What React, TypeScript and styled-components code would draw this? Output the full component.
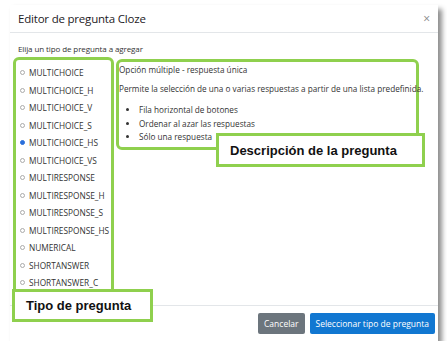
import styled, { createGlobalStyle } from "styled-components";

const GlobalStyle = createGlobalStyle`
    body {
        margin: 0;
        background: #ffffff;
        font-family: "Open Sans", sans-serif;
    }
`

const options = [
    "MULTICHOICE",
    "MULTICHOICE_H",
    "MULTICHOICE_V",
    "MULTICHOICE_S",
    "MULTICHOICE_HS",
    "MULTICHOICE_VS",
    "MULTIRESPONSE",
    "MULTIRESPONSE_H",
    "MULTIRESPONSE_S",
    "MULTIRESPONSE_HS",
    "NUMERICAL",
    "SHORTANSWER",
    "SHORTANSWER_C",
]

const bullets = [
    "Fila horizontal de botones",
    "Ordenar al azar las respuestas",
    "Sólo una respuesta",
]

export default function App() {
    return (
        <>
            <GlobalStyle />
            <Dialog>
                <Header>
                    <Title>Editor de pregunta Cloze</Title>
                    <Close>×</Close>
                </Header>
                <Body>
                    <Prompt>Elija un tipo de pregunta a agregar</Prompt>
                    <Columns>
                        <TypeList>
                            {options.map((o) => (
                                <Option key={o}>
                                    <Radio $checked={o === "MULTICHOICE_HS"} />
                                    {o}
                                </Option>
                            ))}
                        </TypeList>
                        <Description>
                            <DescTitle>Opción múltiple - respuesta única</DescTitle>
                            <DescText>
                                Permite la selección de una o varias respuestas a partir de una lista predefinida.
                            </DescText>
                            <Bullets>
                                {bullets.map((b) => (
                                    <li key={b}>{b}</li>
                                ))}
                            </Bullets>
                        </Description>
                    </Columns>
                </Body>
                <Footer>
                    <Button $variant="secondary">Cancelar</Button>
                    <Button $variant="primary">Seleccionar tipo de pregunta</Button>
                </Footer>
                {/* etiquetas de la captura anotada */}
                <DescCallout>Descripción de la pregunta</DescCallout>
                <TypeCallout>Tipo de pregunta</TypeCallout>
            </Dialog>
        </>
    );
}

const green = "#8fd04e"

const Dialog = styled.div`
    position: relative;
    margin: 5px 0 0 10px;
    width: 428px;
    height: 336px;
    background: #ffffff;
    box-shadow: 4px 4px 5px rgba(0, 0, 0, 0.45);
    display: flex;
    flex-direction: column;
`

const Header = styled.div`
    height: 27px;
    border-bottom: 1px solid #e3e6e9;
    display: flex;
    align-items: center;
    justify-content: space-between;
    padding: 0 8px;
`

const Title = styled.div`
    font-size: 11.5px;
    letter-spacing: -0.2px;
    color: #1d2125;
`

const Close = styled.div`
    font-size: 12px;
    color: #888;
`

const Body = styled.div`
    flex: 1;
    padding: 10px 0 0 3px;
    overflow: hidden;
`

const Prompt = styled.div`
    font-size: 8px;
    letter-spacing: -0.1px;
    color: #333;
    margin: 0 0 3px 5px;
`

const Columns = styled.div`
    display: flex;
    align-items: flex-start;
    gap: 2px;
`

const TypeList = styled.div`
    width: 95px;
    height: 232px;
    border: 3px solid ${green};
    border-radius: 6px;
    padding-top: 4px;
    display: flex;
    flex-direction: column;
`

const Option = styled.div`
    height: 17.5px;
    display: flex;
    align-items: center;
    gap: 4px;
    padding-left: 4px;
    font-size: 8.3px;
    color: #333;
    white-space: nowrap;
`

const Radio = styled.span<{ $checked: boolean }>`
    width: 5px;
    height: 5px;
    border-radius: 50%;
    box-sizing: border-box;
    border: 1px solid ${(p) => (p.$checked ? "#2a6fdb" : "#aaa")};
    background: ${(p) => (p.$checked ? "#2a6fdb" : "#fff")};
`

const Description = styled.div`
    width: 297px;
    height: 83px;
    margin-top: 2px;
    border: 3px solid ${green};
    border-radius: 6px;
    padding: 2px 0 0 0;
    font-size: 8.2px;
    color: #333;
`

const DescTitle = styled.div`
    margin-bottom: 8px;
`

const DescText = styled.div`
    white-space: nowrap;
`

const Bullets = styled.ul`
    margin: 9px 0 0;
    padding-left: 20px;
    line-height: 13.5px;
`

const Footer = styled.div`
    height: 35px;
    border-top: 1px solid #e3e6e9;
    display: flex;
    align-items: center;
    justify-content: flex-end;
    gap: 5px;
    padding: 0 3px 0 0;
`

const Button = styled.div<{ $variant: "primary" | "secondary" }>`
    height: 21px;
    padding: 0 6px;
    display: flex;
    align-items: center;
    border-radius: 2px;
    font-size: 8.5px;
    color: #fff;
    background: ${(p) => (p.$variant === "primary" ? "#1177d1" : "#6c757d")};
`

const Callout = styled.div`
    position: absolute;
    box-sizing: border-box;
    background: #fff;
    border: 3px solid ${green};
    display: flex;
    align-items: center;
    padding-left: 11px;
    font-family: "Liberation Sans", Arial, sans-serif;
    font-weight: 700;
    font-size: 13px;
    color: #111;
`

const DescCallout = styled(Callout)`
    left: 206px;
    top: 128px;
    width: 209px;
    height: 34px;
`

const TypeCallout = styled(Callout)`
    left: 2px;
    top: 284px;
    width: 141px;
    height: 33px;
`
